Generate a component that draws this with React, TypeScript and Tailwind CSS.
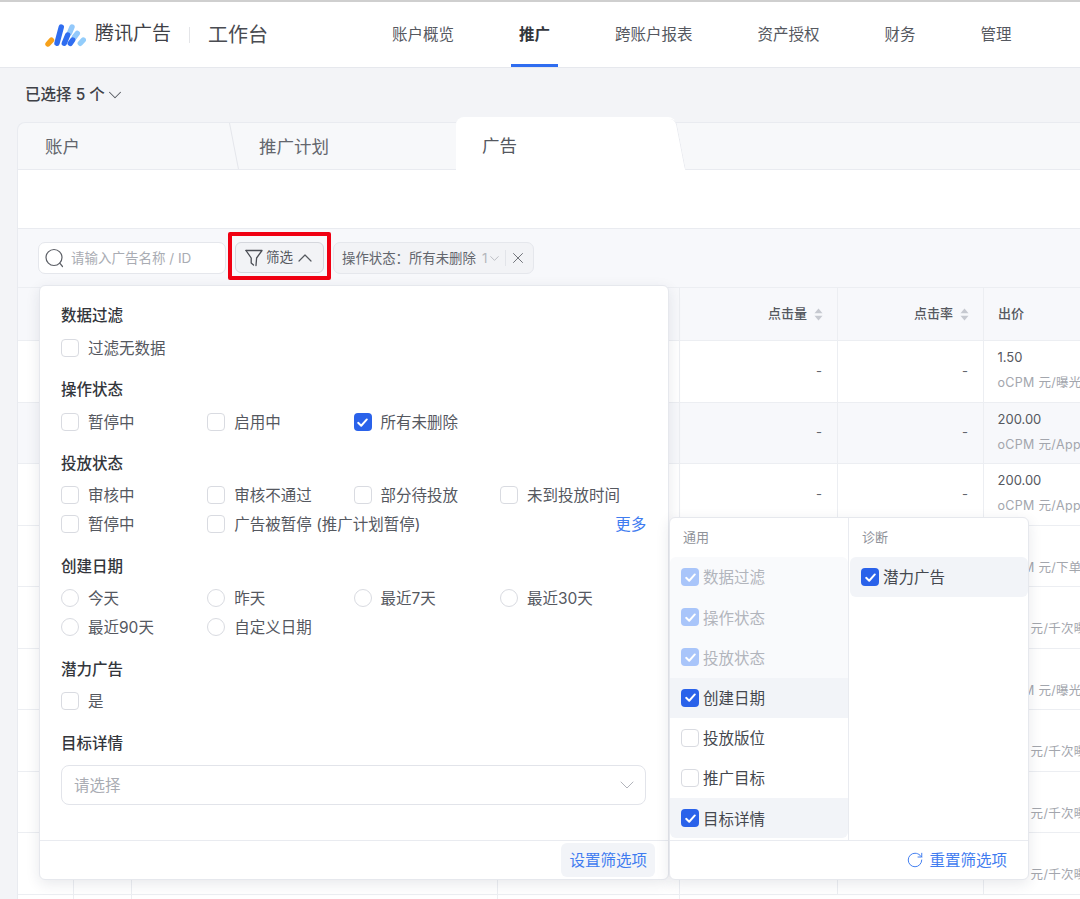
import { ChevronDown, ChevronUp, RotateCw, X } from "lucide-react";

const tableCols = "grid grid-cols-[56px_58px_366px_182px_158px_146px_1fr]";

const bids = [
  { bid: "1.50", unit: "oCPM 元/曝光" },
  { bid: "200.00", unit: "oCPM 元/App" },
  { bid: "200.00", unit: "oCPM 元/App" },
  { bid: "", unit: "oCPM 元/下单" },
  { bid: "", unit: "CPM 元/千次曝光" },
  { bid: "", unit: "oCPM 元/曝光" },
  { bid: "", unit: "CPM 元/千次曝光" },
  { bid: "", unit: "CPM 元/千次曝光" },
  { bid: "", unit: "CPM 元/千次曝光" },
];

const Logo = () => (
  <svg width="42" height="26" viewBox="0 0 42 26" fill="none" strokeLinecap="round" strokeWidth="5.4">
    <path d="M4 22 L7.5 18.2" stroke="#f7a11a" />
    <path d="M25.5 11 L28 5" stroke="#93c9fb" />
    <path d="M30.5 15 L33.3 11.3" stroke="#93c9fb" />
    <path d="M36.3 21.3 L39.3 18" stroke="#93cdfb" />
    <path d="M13 21.3 L17.3 5" stroke="#2f6df0" />
    <path d="M20.3 21.3 L23.7 13" stroke="#2f6df0" />
    <path d="M26.3 21.3 L28.7 18" stroke="#2f6df0" />
  </svg>
);

const SortIcon = () => (
  <svg width="9" height="13" viewBox="0 0 9 13" fill="#c6c9d0">
    <path d="M4.5 0.5 L8.5 5.2 H0.5 Z" />
    <path d="M4.5 12.5 L8.5 7.8 H0.5 Z" />
  </svg>
);

const SearchIcon = () => (
  <svg width="19" height="20" viewBox="0 0 19 20" fill="none" stroke="#5c5f66" strokeWidth="1.2" strokeLinecap="round">
    <circle cx="9" cy="9.5" r="8" />
    <path d="M14.8 15.2 L17.5 18.5" />
  </svg>
);

const FunnelIcon = () => (
  <svg width="18" height="18" viewBox="0 0 18 18" fill="none" stroke="#4b4e55" strokeWidth="1.3" strokeLinejoin="round" strokeLinecap="round">
    <path d="M1 1.5 H17 L11.6 9 L11 16.5" />
    <path d="M1 1.5 L6.2 9 V14 L8.5 16" />
  </svg>
);

const Tick = () => (
  <svg width="13" height="13" viewBox="0 0 12 12" fill="none" stroke="#fff" strokeWidth="1.8" strokeLinecap="round" strokeLinejoin="round">
    <path d="M2 6.3 L4.8 9 L10 3.2" />
  </svg>
);

const Checkbox = ({ checked = false, disabled = false }: { checked?: boolean; disabled?: boolean }) => {
  if (!checked) {
    return <span className="w-[18px] h-[18px] shrink-0 rounded-[4px] border border-[#d9dbe1] bg-white" />;
  }
  return (
    <span className={`w-[18px] h-[18px] shrink-0 rounded-[4px] flex items-center justify-center ${disabled ? "bg-[#a9c5fa]" : "bg-[#2a62ea]"}`}>
      <Tick />
    </span>
  );
};

const Radio = () => <span className="w-[18px] h-[18px] shrink-0 rounded-full border border-[#d9dbe1] bg-white" />;

const Option = ({ label, checked, radio }: { label: string; checked?: boolean; radio?: boolean }) => (
  <label className="flex items-center gap-[9px] h-[20px] whitespace-nowrap">
    {radio ? <Radio /> : <Checkbox checked={checked} />}
    <span className="pt-[2px]">{label}</span>
  </label>
);

const Section = ({ title, tight, after = "mb-[21px]", children }: { title: string; tight?: boolean; after?: string; children: React.ReactNode }) => (
  <div className={after}>
    <div className={`h-[20px] pt-[1px] leading-[20px] font-medium text-[#33363c] ${tight ? "mb-[12px]" : "mb-[13px]"}`}>{title}</div>
    {children}
  </div>
);

const OptionGrid = ({ children }: { children: React.ReactNode }) => (
  <div className="grid grid-cols-[146.3px_146.3px_146.3px_146.3px] gap-y-[9px]">{children}</div>
);

const FilterPanel = () => (
  <div className="absolute left-[39px] top-[285px] w-[630px] h-[595px] flex flex-col rounded-[6px] bg-white border border-[#e6e8ed] shadow-[0_4px_14px_rgba(30,40,70,0.1)] text-[15.5px] text-[#55585f] z-10">
    <div className="flex-1 pl-[21px] pr-[22px] pt-[19px]">
      <Section title="数据过滤">
        <Option label="过滤无数据" />
      </Section>
      <Section title="操作状态">
        <OptionGrid>
          <Option label="暂停中" />
          <Option label="启用中" />
          <Option label="所有未删除" checked />
        </OptionGrid>
      </Section>
      <Section title="投放状态" tight>
        <OptionGrid>
          <Option label="审核中" />
          <Option label="审核不通过" />
          <Option label="部分待投放" />
          <Option label="未到投放时间" />
          <Option label="暂停中" />
          <Option label="广告被暂停 (推广计划暂停)" />
          <span />
          <span className="text-right text-[#3f7cf0] leading-[20px] pt-[1px]">更多</span>
        </OptionGrid>
      </Section>
      <Section title="创建日期" tight after="mb-[22px]">
        <OptionGrid>
          <Option label="今天" radio />
          <Option label="昨天" radio />
          <Option label="最近7天" radio />
          <Option label="最近30天" radio />
          <Option label="最近90天" radio />
          <Option label="自定义日期" radio />
        </OptionGrid>
      </Section>
      <Section title="潜力广告" tight after="mb-[22px]">
        <Option label="是" />
      </Section>
      <div className="h-[20px] pt-[1px] leading-[20px] mb-[12px] font-medium text-[#33363c]">目标详情</div>
      <div className="h-[40px] w-[585px] flex items-center justify-between pl-[12px] pr-[6px] rounded-[8px] border border-[#e2e4ea] text-[#a9acb3]">
        <span className="pt-[2px]">请选择</span>
        <ChevronDown size={24} strokeWidth={0.9} color="#a9acb3" />
      </div>
    </div>
    <div className="h-[39px] border-t border-[#e9ebf0] flex items-center justify-end pr-[13px]">
      <span className="h-[34px] px-[8px] pt-[1px] flex items-center rounded-[6px] bg-[#f2f4f8] text-[#3f7cf0]">设置筛选项</span>
    </div>
  </div>
);

const PickerItem = ({ label, checked, disabled, rounded }: { label: string; checked?: boolean; disabled?: boolean; rounded?: string }) => (
  <div
    className={`h-[40.2px] pl-[11px] flex items-center gap-[4px] ${rounded ?? ""} ${
      disabled ? "bg-[#f9fafc] text-[#b2b5bc]" : checked ? "bg-[#f2f4f8] text-[#45484f]" : "text-[#45484f]"
    }`}
  >
    <Checkbox checked={checked} disabled={disabled} />
    <span className="pt-[2px]">{label}</span>
  </div>
);

const FieldPicker = () => (
  <div className="absolute left-[669px] top-[517px] w-[360px] h-[363px] flex flex-col rounded-[6px] bg-white border border-[#e6e8ed] shadow-[0_4px_14px_rgba(30,40,70,0.1)] text-[15.5px] z-20">
    <div className="flex-1 flex min-h-0">
      <div className="w-[179px] border-r border-[#e9ebf0]">
        <div className="h-[39px] pl-[13px] flex items-center text-[13px] text-[#8f9299]">通用</div>
        <PickerItem label="数据过滤" checked disabled rounded="rounded-t-[6px]" />
        <PickerItem label="操作状态" checked disabled />
        <PickerItem label="投放状态" checked disabled />
        <PickerItem label="创建日期" checked />
        <PickerItem label="投放版位" />
        <PickerItem label="推广目标" />
        <PickerItem label="目标详情" checked rounded="rounded-b-[6px]" />
      </div>
      <div className="flex-1 pl-[1px]">
        <div className="h-[39px] pl-[12px] flex items-center text-[13px] text-[#8f9299]">诊断</div>
        <PickerItem label="潜力广告" checked rounded="rounded-[6px]" />
      </div>
    </div>
    <div className="h-[39px] border-t border-[#e9ebf0] flex items-center justify-end gap-[5px] pr-[21px] text-[#3f7cf0]">
      <RotateCw size={18} strokeWidth={1.3} />
      <span className="pt-[2px]">重置筛选项</span>
    </div>
  </div>
);

const Tabs = () => (
  <div className="h-[53px] flex items-end text-[17.5px] text-[#63666d]">
    <div className="w-[212px] h-[48px] pl-[27px] pt-[2px] flex items-center rounded-tl-[8px] bg-[#f7f8fa] border-t border-l border-b border-[#e9ebf0]">
      账户
    </div>
    <div className="relative w-[227px] h-[48px] pl-[30px] pt-[2px] flex items-center bg-[#f7f8fa] border-t border-b border-[#e9ebf0]">
      <span className="absolute left-0 top-0 bottom-0 w-[5px] border-l border-[#e4e6eb] skew-x-[11deg] origin-top" />
      推广计划
    </div>
    <div className="relative z-[1] w-[220px] h-[53px] pl-[26px] pt-[5px] flex items-center rounded-t-[8px] bg-white text-[#55585f]">
      广告
      <span className="absolute top-[2px] bottom-0 -right-[5px] w-[12px] rounded-tr-[6px] bg-white border-r border-[#e9ebf0] skew-x-[11deg]" />
    </div>
    <div className="flex-1 h-[48px] bg-[#f7f8fa] border-t border-b border-[#e9ebf0]" />
  </div>
);

const Toolbar = () => (
  <div className="h-[59px] bg-[#f7f8fb] border-t border-[#e9ebf0] pl-[20px] pt-[13px] flex items-start gap-[9px] text-[13.5px]">
    <div className="w-[188px] h-[32px] flex items-center gap-[7px] pl-[6px] rounded-[7px] bg-white border border-[#e5e7ec] text-[#a9acb3]">
      <SearchIcon />
      <span>请输入广告名称 / ID</span>
    </div>
    <div className="relative w-[89px] h-[31px] flex items-center pl-[9px] rounded-[6px] bg-[#f2f3f6] border border-[#d5d7dd] text-[#55585f]">
      <FunnelIcon />
      <span className="ml-[3px]">筛选</span>
      <ChevronUp size={24} strokeWidth={1.2} color="#55585f" />
      <span className="absolute -left-[8px] -top-[11px] w-[103px] h-[48px] border-4 border-[#f00012] rounded-[2px]" />
    </div>
    <div className="w-[201px] h-[32px] flex items-center pl-[8px] rounded-[7px] bg-[#f2f3f6] border border-[#e5e7ec] text-[13.4px] text-[#63666d]">
      <span className="whitespace-nowrap">操作状态：所有未删除</span>
      <span className="ml-[6px] text-[#b4b7bd]">1</span>
      <ChevronDown size={15} strokeWidth={1.2} color="#a9acb3" />
      <span className="w-px h-[16px] bg-[#e2e4e9] ml-[3px] mr-[3px]" />
      <X size={18} strokeWidth={1.2} color="#63666d" />
    </div>
  </div>
);

const Table = () => (
  <div className="text-[13px] text-[#55585f]">
    <div className={`${tableCols} h-[54px] bg-[#f7f8fb] border-t border-b border-[#eceef2] font-medium`}>
      <div className="border-r border-[#eceef2]" />
      <div className="border-r border-[#eceef2]" />
      <div className="border-r border-[#eceef2]" />
      <div className="border-r border-[#eceef2]" />
      <div className="border-r border-[#eceef2] flex items-center justify-end gap-[7px] pr-[14px]">
        点击量
        <SortIcon />
      </div>
      <div className="border-r border-[#eceef2] flex items-center justify-end gap-[7px] pr-[14px]">
        点击率
        <SortIcon />
      </div>
      <div className="flex items-center pl-[14px]">出价</div>
    </div>
    {bids.map((row, i) => (
      <div key={i} className={`${tableCols} h-[61.5px] border-b border-[#eceef2] ${i === 1 ? "bg-[#f7f8fb]" : "bg-white"}`}>
        <div className="border-r border-[#eceef2]" />
        <div className="border-r border-[#eceef2]" />
        <div className="border-r border-[#eceef2]" />
        <div className="border-r border-[#eceef2]" />
        <div className="border-r border-[#eceef2] flex items-center justify-end pr-[15px] text-[#63666d]">-</div>
        <div className="border-r border-[#eceef2] flex items-center justify-end pr-[15px] text-[#63666d]">-</div>
        <div className="min-w-0 pl-[13.5px] pt-[7px] whitespace-nowrap overflow-hidden">
          <div className="h-[18px] leading-[18px]">{row.bid}</div>
          <div className="mt-[8px] h-[18px] leading-[18px] text-[12.5px] tracking-[0.3px] text-[#a3a6ad]">{row.unit}</div>
        </div>
      </div>
    ))}
    <div className={`${tableCols} h-[40px] bg-white`}>
      <div className="border-r border-[#eceef2]" />
      <div className="border-r border-[#eceef2]" />
      <div className="border-r border-[#eceef2]" />
      <div className="border-r border-[#eceef2]" />
    </div>
  </div>
);

export default function App() {
  return (
    <div className="relative h-[899px] overflow-hidden bg-[#f3f4f7] font-['Inter','Noto_Sans_CJK_SC',sans-serif]">
      <header className="h-[68px] bg-white border-t-2 border-t-[#cfcfcf] border-b border-b-[#e6e8ed] flex items-stretch">
        <div className="w-[392px] pl-[44px] flex items-center shrink-0">
          <Logo />
          <span className="ml-[9px] text-[19px] text-[#3f4147]">腾讯广告</span>
          <span className="w-px h-[16px] bg-[#e4e5e8] mx-[18px]" />
          <span className="text-[20px] text-[#4a4c52]">工作台</span>
        </div>
        <nav className="flex gap-[65px] text-[15.5px] text-[#55585f]">
          <span className="flex items-center">账户概览</span>
          <span className="-mx-[8px] px-[8px] flex items-center border-b-[3px] border-[#2f6df0] pt-[3px] font-semibold text-[#33363c]">推广</span>
          <span className="flex items-center">跨账户报表</span>
          <span className="flex items-center">资产授权</span>
          <span className="flex items-center">财务</span>
          <span className="flex items-center">管理</span>
        </nav>
      </header>

      <div className="h-[49px] pl-[25px] pt-[5px] flex items-center text-[15.5px] font-medium text-[#3f4147]">
        已选择 5 个
        <ChevronDown size={22} strokeWidth={1.1} color="#55585f" className="-ml-[1px]" />
      </div>

      <main className="ml-[17px]">
        <Tabs />
        <div className="border-l border-[#e9ebf0]">
          <div className="h-[58px] bg-white" />
          <Toolbar />
          <Table />
        </div>
      </main>

      <FilterPanel />
      <FieldPicker />
    </div>
  );
}
